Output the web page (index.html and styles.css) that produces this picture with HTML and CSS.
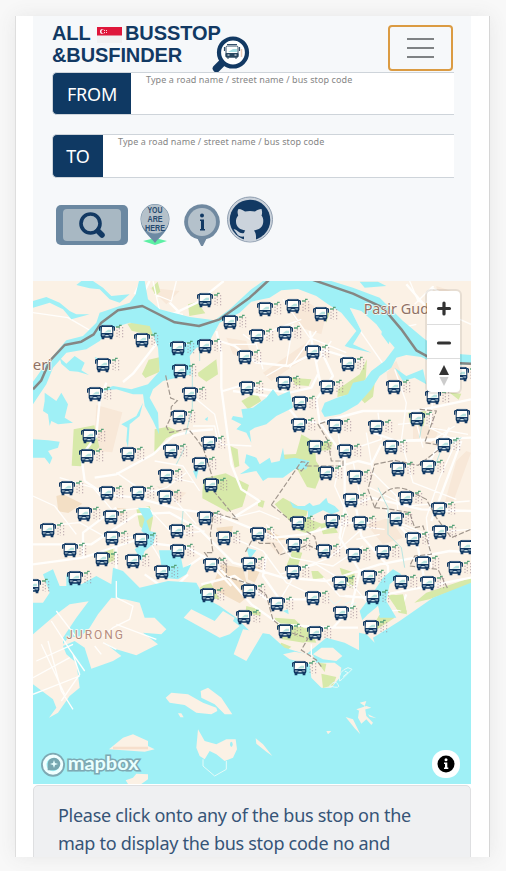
FILE: index.html
```html
<!DOCTYPE html>
<html lang="en">
<head>
<meta charset="utf-8">
<title>All Busstop &amp; Busfinder</title>
<link rel="stylesheet" href="styles.css">
</head>
<body>
<div class="page">
  <header class="panel">
    <div class="navbar">
      <div class="brand">
        <div class="brand-line"><span class="all">ALL</span>
          <svg class="flag" viewBox="0 0 25 16"><path fill="#f1f1f2" d="M0 0h25v16H0z"/><path fill="#df173b" d="M0 0h25v8.500H0z"/><circle cx="5.500" cy="4.500" r="2.500" fill="#fff"/><circle cx="6.600" cy="4.500" r="2.200" fill="#df173b"/><path d="M7 3.500h1m1 0h1M7 5.500h1m1 0h1" stroke="#ffd8dd"/></svg>
          <span class="busstop">BUSSTOP</span></div>
        <div class="brand-line second">&amp;BUSFINDER</div>
        <svg class="brand-glass" viewBox="0 0 38 36"><path d="M12 25 4.500 32.500" stroke="#123963" stroke-width="7.500" stroke-linecap="round"/><circle cx="21" cy="16.500" r="14" fill="#fff" stroke="#123963" stroke-width="4.200"/><rect x="14" y="10" width="12" height="11" rx="1.500" fill="#fff" stroke="#34506b"/><path d="M15 8.500h10M12.500 11v4m15-4v4" stroke="#34506b" stroke-width="1.200"/><path d="m16 16 5-3h4v3z" fill="#a8dfe3"/><path d="M14 17.500h12V21H14zM16 20v3m8-3v3" fill="#28465f" stroke="#28465f"/><path d="M15.500 19h2m5 0h2" stroke="#fff"/><path d="M29.500 13v8" stroke="#e8cbb8" stroke-width="1.500"/></svg>
      </div>
      <button class="toggler" aria-label="Menu"><i></i><i></i><i></i></button>
    </div>
    <div class="field"><span class="tag from">FROM</span><span class="input">Type a road name / street name / bus stop code</span></div>
    <div class="field second-field"><span class="tag to">TO</span><span class="input">Type a road name / street name / bus stop code</span></div>
    <div class="tools">
      <svg class="t-search" viewBox="0 0 72 40"><rect width="72" height="40" rx="5" fill="#6b88a1"/><rect x="7" y="4" width="58" height="32" rx="4" fill="#a8b8c3"/><circle cx="34.500" cy="18.500" r="9.500" fill="none" stroke="#123963" stroke-width="3.600"/><path d="m42 26 4 4" stroke="#123963" stroke-width="5.500" stroke-linecap="round"/></svg>
      <svg class="t-here" viewBox="0 0 30 42"><path d="m3 37 12-3 12 3-12 4z" fill="#5cf0a4"/><path d="M15 39C11 33 .5 27 .5 15a14.500 15 0 0 1 29 0C29.500 27 19 33 15 39z" fill="#6d8aa3"/><ellipse cx="15" cy="15" rx="14" ry="14.500" fill="#b5c1ca"/><g class="here-text"><text x="15" y="9.300" textLength="15" lengthAdjust="spacingAndGlyphs">YOU</text><text x="15" y="18.300" textLength="15" lengthAdjust="spacingAndGlyphs">ARE</text><text x="15" y="27.300" textLength="20" lengthAdjust="spacingAndGlyphs">HERE</text></g></svg>
      <svg class="t-info" viewBox="0 0 36 42"><path d="m18 41-3.500-7a16.500 16.500 0 1 1 7 0z" fill="#7089a0" stroke="#7089a0" stroke-width="2.500" stroke-linejoin="round"/><circle cx="18" cy="18" r="14" fill="#b4c1cb"/><circle cx="18" cy="11.500" r="2" fill="#123963"/><path d="M16 15.500h4V25h1v1.500h-5V25h1v-8h-1z" fill="#123963"/></svg>
      <svg class="t-git" viewBox="0 0 48 47"><defs><clipPath id="disc"><circle cx="24" cy="23.500" r="22"/></clipPath></defs><circle cx="24" cy="23.500" r="22.500" fill="#cbd3dc" stroke="#8e9daf"/><circle cx="24" cy="24" r="20.300" fill="#123963"/><path clip-path="url(#disc)" fill="#cbd3dc" d="M12.500 13c3 0 5 1.500 6.500 2.500q5-1.200 10 0c2-1.500 4-2.500 6.500-2.500q1.200 4 0 6.500c2 2.500 2 5 1.500 8-1 4-4 6-9 7 1.500 2 2 4 2 6v6H18v-6c-6 1-7-3-9-5.500q-2-1.500-1-1.800c4 .5 5 5 10 3.800.2-1 .5-1.800 1.200-2.500-5-1-8-3-9-7-.5-3-.2-5.500 2-8-1-3-.8-5 .3-6.500z"/></svg>
    </div>
  </header>
  <main class="map">
    <svg class="chart" viewBox="0 0 1314 1509">
      <defs>
        <symbol id="bus" viewBox="0 0 84 54" overflow="visible">
          <g class="shelter"><path d="M57 20v27M64 15v28M74 12v36" stroke="#9a8290" stroke-width="2" stroke-dasharray="4 5"/><path d="M54 12h12m-3-5h8" stroke="#58a27a" stroke-width="4"/></g>
          <rect x="8" y="6" width="38" height="38" rx="6" fill="#123963"/>
          <path d="M12 12h30l1 18H11z" fill="#fffdf9"/><path d="M14 7h26" stroke="#7690a8" stroke-width="2"/>
          <path d="m18 29 12-9h9v8z" fill="#b7e3df"/>
          <path d="M5 11v12M49 11v12M5 11h5m34 0h5" stroke="#123963" stroke-width="4" fill="none"/>
          <path d="M15 42v7m24-7v7" stroke="#123963" stroke-width="8"/>
          <path d="M12 36h8m14 0h8M22 38h10" stroke="#c9dce3" stroke-width="3.500"/>
        </symbol>
      </defs>
      <path fill="#fbf1e5" d="M0 0h1314v1509H0z"/>
      <g class="town"><path d="M70 645l20-5 58 28-42 28-30-5zM565 850l65 12 20 80-30 25-85-45zM550 740l50-5-10 50-30-5zM645 850l40 10-20 45-20-10zM250 680l30 3-15 22zM690 740l70 35-30 5z"/><path class="soft" d="M190 372l78 22-30 120-55-5zM690 275l130-90 35 25-75 45-65 45zM1060 265l30-25 25 60-50 15zM1270 540l30-30 14 5-60 165-20-10zM350 20l90 10-40 40zM580 170l60 10 20 60-60-20zM770 90l50-30 60 40-15 60-60-20zM1210 15l60 20-20 80-30-20zM370 615l90 20-30 30zM1000 730l70-20 40 60-60 20zM700 780l60 10-20 35zM1140 430l80 10-20 50-60-15z"/></g>
      <g class="park"><path d="M122 445l62-12 15 65-55 58-28-2zM283 128l35-6 55 20-12 22-65-15zM347 236l35-8-3 45-42 18-10-12zM495 275l55-40 5 45-35 22-24-17zM365 445l40-8 35 15-40 20-26 30-10 15zM465 70l27-8 25 35-48 8zM356 20l18-18 8 30-14 12zM508 632l5-40 65-15 70 35-20 65-45 15-75-40zM592 495l22 10 5 50-14 5zM625 360l45-25 15 25-40 25zM775 290l60 5-8 20-40-3zM870 90l20 5-10 30zM915 325l65-45 22-45-4 60-45 45-40 8zM975 345l50-38-5 40-25 20zM800 480l5-20 45 25 50-3-8 25-45 3 2 30 20 30-22 53-25-5-30-55-40-22-8-20 45-2zM725 670l25-20 45 25 30 10-5 20-50 15zM770 705l20-5 80 30-40 30-45-15zM770 870l-12-10 20-50 30 5-15 45zM310 685l40-10 10 35-10 55-30-30zM210 808l30-10 5 40-25 10zM725 1010l60 5 42 40-15 30-65-10zM780 1045l50-5 20 45-40-3zM1070 940l40 5 12 55-25-5zM1030 995l35-5 20 20-60 40zM1180 935l134-45v20l-125 45-45 10zM920 860l45 15-5 45-25-10zM640 975l45 12-3 18-45-10zM500 920l30-20 30 55-40-5zM745 1085l30 12-15 12-25-12zM855 1145l55 15-10 65-35-25zM1250 335l35 3-8 18z"/><path d="M1125 395l55-5-8 45-40-5zM860 730l35-10 20 35-45 5zM835 870l20 0 20 20-35 5zM675 655l20 5-5 20-15-5z"/></g>
      <g class="road thin"><path d="M0 645l65 30 65 85M20 735l120-10 90 50 110-10 55 90M80 590l100 30 60 70 105-10 75 80 95-10M250 575l65 45 95 20 80 90M365 540l85 15 50 75M485 350l60 50 20 90 90 5M610 775l80 35 70 95 85 40M700 730l75 100 125 25 90-60M1000 455l20 120 70 70 10 90 75 30M910 420l15 100-20 95 40 90-30 110M1200 350l-10 90 80 40-50 110-40 120 15 150M1085 265l35 100-15 115 35 125 130 50M740 880l110-30 115 70 65 75 90-10M870 890l50 55 90 5M745 950l50-85 95-35 90-80M585 190l80 0 60-45 80-30M630 160l40 30 20 75M750 55l80 115 110 45M780 130l-20 120-60 35M850 150l-80 110M895 180l-45 65M950 85l35 70 80 115M1130 0l25 60 159 70M1145 70l50-50 80 40M1060 150l90-20M360 0l20 90 70 10M430 0l-15 60-50-20M0 95l105 15 95 55M480 435l65 0 10 50M600 710l80-20 60 25M1060 710l110 45 144-10M1010 620l110 55 190-15"/><path d="M0 1110l100-75 55 145M55 1070l50 180 90 15M0 1210l135-50M90 1000l60 80 55-10M230 950l75 80 70 30M185 1150l60-45M175 1140l60 10M330 640l70-20 60-45M415 590l70 15M965 735l90 10M970 775l70-15M1035 395l10 80-60 20M1095 430l55-5 20 75M1115 480l80 0 70-45M1190 440l115 20M960 540l20 100-40 35"/></g>
      <g class="road"><path d="M0 850l150-20 150-50 165 20 80 45 110 125 85 60 145 10 90 0M0 790l175 0 135-90 100-5 90 50 100 100 150 45 130 10 160-50 210-40 174 10M150 830l0-75 100-75M155 600l-10-75 45-60 10-105 20-55M185 590l65-10 110-60 60-55 60-15 60-5M155 600l60 40 95 10 130 35 110 15 175 70 90-10 125-35 70 0M250 800v145M285 980l10-30M410 188h-40l-70 90-30 25M560 180l45 15 65 50 95 10 100-50 115 35M600 710l80-50-55-35-30-75-30-230 0-105-15-65M570 330l50-15 150 20 65-15 20-40M850 425l-55-10-55-65-140-20M860 425l-10-70 50-70-35-75M860 425l130-35h160l164-35M860 425l75 105 0 150-15 90 60 100-25 110-55 60M1045 490l-30 60-40-10-70 20M1020 455l70 25 224-10M935 680l80-30 150 35 149 5M1055 680l100 120 20 100M1060 940l254-50M1190 540l60-100M1285 480l-90 240M970 685l15 80 80 90 0 60-70 35-60-5M700 820l-10 65 50 70 90 0"/><path d="M460 860l50-35 85 90M505 910l100-25 110 80M335 880l50 35 50-5 30-30M1120 940l-20 50M830 150l35 170M1180 75l20-60M305 40l20-40M350 0l-18 35 20 45 55 25 85-40 80-65M410 65l30 30M1120 10l70 80-10 120"/></g>
      <g class="water">
        <path d="M0 302 30 260 60 225 100 178 150 165 190 125 200 95 240 82 290 65 308 40 318 0H335L345 55 380 85 470 108 545 118 590 85 655 25 690 0H895L960 20 1040 50 1110 120 1170 170 1230 215 1314 222V250L1220 255 1165 228 1120 222 1090 230 1075 260 1040 285 1015 325 975 370 940 390 920 400 875 408 865 390 875 365 912 350 945 340 960 305 995 298 1015 270 1055 240 1085 200 1060 170 1030 130 985 90 950 80 985 150 960 190 1015 215 950 200 935 195 970 150 925 95 885 70 850 45 795 24 745 28 710 50 655 62 620 95 560 125 535 170 530 190 490 200 470 225 475 280 430 290 390 300 360 325 350 350 375 395 378 460 360 420 335 375 330 340 300 340 250 325 200 330 240 315 295 325 345 310 380 270 375 200 350 135 290 125 240 140 200 180 160 205 100 215 60 260 40 310 0 370Z"/>
        <path d="M330 365 320 405 290 430 285 500 280 480 283 440 265 430 310 405Z"/>
        <path d="M80 230 100 248 125 225 155 245 145 268 168 282 135 272 110 270 85 248ZM35 335 70 360 85 335 105 370 95 410 120 425 75 430 55 420 50 435 45 400 30 390 35 360ZM0 475 45 478 80 482 75 500 60 505 45 510 58 530 50 550 35 530H0ZM185 228 215 238 195 247Z"/>
        <path d="M720 325 735 345 770 330 780 380 750 395 730 405 700 430 665 440 650 450 655 485 640 455 610 445 625 430 595 415 600 405 630 410 625 385 660 380 700 350Z"/>
        <path d="M640 520 670 530 680 550 710 530 715 545 740 540 750 500 755 535 785 530 830 540 820 565 785 565 750 590 705 590 690 600 670 570 620 580 650 560 635 545Z"/>
        <path d="M770 660 790 675 815 675 830 665 840 675 860 670 880 650 885 665 905 675 920 690 895 700 870 688 845 700 825 710 825 690 780 680Z"/>
        <path d="M315 680 350 682 360 705 340 720 350 750 370 755 360 790 335 810 325 840 305 805 340 780 345 765 325 750 335 715ZM378 808 440 808 450 860 475 850 460 880 435 895 390 890ZM640 800 670 808 650 835ZM480 570 498 560 490 595ZM515 415 525 407 523 420ZM750 990 765 985 767 1000Z"/>
        <path d="M180 0 210 20 235 45 290 40 260 65 230 55 200 25 170 22 130 12 145 0ZM0 60 40 48 80 65 110 90 130 100 170 100 115 115 90 85 50 65 0 80ZM1050 135 1075 165 1067 190 1045 160ZM995 20 1060 15 1035 2H980ZM1085 260 1120 285 1170 265 1180 310 1145 290 1110 300Z"/>
        <path d="M0 965 30 965 50 935 30 880 60 865 80 915 100 915 100 880 145 910 190 885 235 910 240 860 270 870 320 920 405 900 490 905 515 950 560 975 610 1010 650 1050 710 1060 755 1100 805 1115 820 1120 850 1095 880 1070 935 1085 978 1108V1055L1000 1060 1025 1085 1020 1070 1100 1020 1200 950 1314 905V1509H0Z"/>
        <path d="M1010 950 1050 890 1080 865 1105 880 1070 910 1060 960 1090 1010 1040 1010 1035 975 990 1025 980 990Z"/>
      </g>
      <g fill="#fbf1e5">
        <path d="M0 1060 70 1000 110 970 167 961 130 1010 90 1070 90 1090 105 1070 145 1065 170 1040 195 1000 235 950 275 955 320 965 335 1010 365 1010 400 1045 385 1060 330 1055 375 1090 310 1123 250 1105 215 1085 265 1125 240 1140 175 1163 155 1100 125 1080 90 1095 100 1120 130 1145 140 1220 110 1245 75 1295 48 1310 70 1280 60 1255 0 1210Z"/>
        <path d="M452 1010 475 985 545 1020 570 990 605 1010 600 1020 620 1035 590 1060 560 1070ZM630 1045 690 1055 640 1140 602 1120ZM750 1120 785 1112 840 1122 850 1145 905 1145 925 1160 920 1190 895 1220 865 1220 835 1190 830 1150 770 1135ZM840 1120 865 1100 900 1100 928 1125 910 1140 870 1135Z"/>
        <path d="M398 1250 415 1235 465 1240 510 1265 550 1280 553 1290 535 1300 490 1295 455 1272 410 1265ZM503 1230 525 1220 565 1250 598 1300 575 1300 545 1270 505 1250ZM228 1405 270 1370 300 1360 345 1380 345 1395 365 1405 335 1412ZM495 1345 515 1380 550 1390 580 1375 608 1375 612 1405 600 1430 575 1440 550 1420 530 1410 515 1435 500 1425 490 1400ZM278 1498 300 1490 310 1478 345 1480 345 1495 325 1509H285ZM668 1372 690 1390 718 1425 700 1412 670 1388ZM938 1308 960 1315 982 1360 965 1342ZM978 1290 995 1275 1000 1305 1020 1325 1015 1332 1000 1315 985 1328 975 1310ZM435 1297h10l7 12h-10zM980 1265l20-5-5 15zM880 1350l15 0-10 10zM1005 1300l25 12-20-5zM970 1285l30-10 15 5-35 10z"/>
        <path d="M1035 975 1040 1000 1020 1035 980 1040 985 1020 1005 1000Z"/>
      </g>
      <path class="park" d="M855 1145l25 3-5 25zM865 1178l45 10-10 25-30 8zM1065 945l45-5 12 55-30-10z"/>
      <g class="road thin"><path d="M0 1190l110-60M55 1020l55 85 45 65M45 1080l40 150 35 55M25 1090l70 150M0 1240l140-55M70 990l65 85M10 1140l110-50M120 1120l20 60-55 80M250 900v50l50 25-10 40-50 25-30 25M250 1030l120 45M185 1095l20 25M210 1085l40 20M410 188h60M835 1090v40"/></g>
      <path d="M240 1401h105" stroke="#f6dfcc" stroke-width="8"/><ellipse cx="595" cy="1390" rx="4" ry="8" fill="#9ff0f6"/>
      <g fill="none" stroke="#e5fbf8" stroke-width="3"><path d="M510 1435l0 20 35 30 35-20 0-25M920 1200q-5-30 25-40l12 5-30 30zM935 1170l10 5-15 12M890 1215q15-20 25-5t-25 5M885 950l20 20 20-15M935 970l20-10M950 975l20-10"/></g>
      <g fill="none" stroke="#b9e6e2" stroke-width="3"><path d="M478 260v120l-20 80M455 500l-25 50M1035 620l30 60 0 80 40 40 10 60M1200 570l25-65 60-35M445 750l5-60M1160 470l10-60M770 300l-15 30M500 180v60"/></g>
      <g class="dash"><path d="M398 283l15 68 20 8-18 18-3 35-12 25 10 18 55-12 25 30 22 32 25 80 5 45 70 85-70-20-10 65 8 55-25 0 25 35 20-20 20 22 0 35 80 25 40 30 20 75 45 35 60 20-20 35 45 30 15 20M715 672l90-130 20 3-20 25-15-8M820 555h110v-15h-35l-10-60-30-50 45-15M715 672l75 60 55 35 10 40-30-15-85 30-20-35-40 0-20-15-25 45M1025 680l-20-55 20-75 60-12 70 15 60-45M1025 680q30-75 95-55l60 30 30 55 45 60 59-25M1025 680l50 5 55 10 15 45 25-5 25 85-50 5-15 30 85 10 30 60M1160 385l50 5-35 95 60 10"/></g>
      <path class="border" d="M0 325 25 298 50 240 95 192 145 182 182 160 205 125 255 88 328 75 425 124 498 135 560 115 650 50 710-5M835-5 960 38 1050 80 1105 145 1150 208 1190 230 1250 245 1314 248"/>
      <g class="place"><text x="-1" y="266" textLength="57" font-size="45">eri</text><text x="992" y="99" textLength="196" lengthAdjust="spacingAndGlyphs" font-size="44">Pasir Gud</text><text class="jurong" x="100" y="1074" textLength="170" font-size="36">JURONG</text></g>
      <g id="stops"></g>
      <g class="mark"><circle cx="60" cy="1451" r="31" fill="none" stroke="#7ea9b3" stroke-width="10"/><circle cx="60" cy="1451" r="25" fill="#9ff0f6" stroke="#f0ffff" stroke-width="11"/><path d="M44 1468v-20a19 19 0 1 1 19 20z" fill="#77a7b0"/><path d="m63 1437 3 9 9 3-9 3-3 9-3-9-9-3 9-3z" fill="#e8ffff"/><text x="104" y="1466" textLength="213" lengthAdjust="spacingAndGlyphs">mapbox</text></g>
    </svg>
    <div class="controls"><button aria-label="Zoom in"><svg viewBox="0 0 34 34"><path d="M17 12v11m-5.500-5.500h11" stroke="#333" stroke-width="3.200" stroke-linecap="round"/></svg></button><button aria-label="Zoom out"><svg viewBox="0 0 34 34"><path d="M11.500 18h11" stroke="#333" stroke-width="3.200" stroke-linecap="round"/></svg></button><button aria-label="North"><svg viewBox="0 0 34 34"><path d="m12 16 5-10 5 10z" fill="#333"/><path d="m12.500 18 4.500 9 4.500-9z" fill="#ccc"/></svg></button></div>
    <svg class="attrib" viewBox="0 0 28 28"><rect width="28" height="28" rx="13" fill="#fff"/><circle cx="14" cy="14" r="8.500"/><circle cx="14" cy="9.800" r="1.500" fill="#fff"/><path d="M12 12.500h3.300v5h1V19H12v-1.500h1V14h-1z" fill="#fff"/></svg>
  </main>
  <section class="note"><p>Please click onto any of the bus stop on the</p><p class="line-two">map to display the bus stop code no and</p></section>
</div>
<script src="stops.js"></script>
</body>
</html>
```
FILE: styles.css
```css
* { box-sizing: border-box; }
body { margin: 0; height: 871px; overflow: hidden; background: #f8f8f8; font-family: "Noto Sans", sans-serif; padding: 16px 16px 0 15px; }
.page { width: 475px; height: 841px; padding: 0 18px 0 17px; overflow: hidden; background: #fff; border-left: 1px solid #dedede; border-right: 1px solid #d6d6d6; box-shadow: 0 0 18px #e7e7e7; }
.panel { height: 265px; padding: 0 17px 0 19px; background: #f6f8fa; }
.navbar { height: 56px; display: flex; justify-content: space-between; }
.brand { position: relative; width: 198px; color: #123963; font: bold 20px/26px "Liberation Sans", sans-serif; padding-top: 6px; }
.brand-line { display: flex; height: 22px; white-space: nowrap; align-items: center; }
.all { width: 45px; letter-spacing: -.1px; }
.flag { width: 25px; height: 16px; margin-top: 4px; }
.busstop { margin-left: 3px; letter-spacing: -.1px; }
.second { letter-spacing: -.1px; }
.brand-glass { position: absolute; left: 160px; top: 20px; width: 38px; height: 36px; }
.toggler { width: 65px; height: 46px; margin: 9px 1px 0 0; padding: 0; background: #f6f8fa; border: 2px solid #db9b42; border-radius: 4px; display: flex; flex-direction: column; align-items: center; justify-content: center; gap: 7px; }
.toggler i { width: 27px; height: 2px; background: #7f8284; }
.field { height: 43px; display: flex; }
.second-field { margin-top: 19px; height: 44px; }
.tag { display: flex; align-items: center; justify-content: center; background: #0f3963; color: #fff; font-size: 18px; border: 1px solid #ced4da; border-right: 0; border-radius: 5px 0 0 5px; letter-spacing: -.2px; }
.from { width: 79px; }
.to { width: 51px; }
.input { flex: 1; background: #fff; border: solid #ced4da; border-width: 1px 0; color: #858585; font-size: 9px; line-height: 12px; padding: 1px 0 0 15px; letter-spacing: .1px; white-space: nowrap; }
.tools { display: flex; align-items: flex-start; padding: 18px 0 0 4px; }
.t-search { width: 72px; height: 40px; margin-top: 9px; }
.t-here { width: 30px; height: 42px; margin: 8px 0 0 12px; }
.t-info { width: 36px; height: 42px; margin: 8px 0 0 14px; }
.t-git { width: 48px; height: 47px; margin-left: 6px; }
.here-text { font: bold 9px "Liberation Sans", sans-serif; fill: #274b70; text-anchor: middle; }
.map { position: relative; height: 503px; width: 438px; }
.chart { display: block; width: 438px; height: 503px; }
.water { fill: #9ff0f6; }
.town { fill: #f3dfc5; }
.soft { fill: #f8e8d8; }
.park { fill: #d7e9a9; }
.road { fill: none; stroke: #fffefc; stroke-width: 7; stroke-linejoin: round; }
.thin { stroke-width: 4; }
.dash { fill: none; stroke: #a0968d; stroke-width: 3.5; stroke-dasharray: 16 6; }
.border { fill: none; stroke: #858784; stroke-width: 7.5; stroke-linejoin: round; }
.place { fill: #8f7165; stroke: #fff8ef; stroke-width: 4px; paint-order: stroke; font-family: "Noto Sans", sans-serif; }
.jurong { fill: #b58b7d; font-family: Roboto, sans-serif; }
.mark text { font: bold 54px Lato, sans-serif; fill: #e8ffff; stroke: #7ea9b3; stroke-width: 9px; paint-order: stroke; }
.controls { position: absolute; left: 394px; top: 10px; width: 33px; height: 101px; background: #fff; border-radius: 4px; box-shadow: 0 0 0 2px rgba(0,0,0,.08); }
.controls button { display: block; width: 33px; height: 34px; padding: 0; border: 0; border-bottom: 1px solid #ddd; background: transparent; }
.controls button:last-child { border: 0; }
.controls svg { display: block; width: 34px; height: 34px; }
.attrib { position: absolute; left: 399px; top: 469px; width: 28px; height: 28px; }
.note { width: 438px; height: 90px; margin-top: 1px; padding: 15px 24px; background: #eff0f2; border: 1px solid #dedfe1; border-radius: 5px 5px 0 0; color: #365477; font-size: 18px; line-height: 28px; }
.note p { margin: 0; white-space: nowrap; letter-spacing: -.28px; }
```
FILE: stops.js
```js
// Centre of each bus stop marker in page coordinates; the chart origin is 33,281.
const stops = "205,300 230,322 107,332 142,340 178,348 205,346 103,365 180,371 95,394 190,394 179,417 89,436 209,443 245,357 247,388 265,309 293,306 321,314 257,336 285,333 313,352 348,364 284,383 327,387 300,403 299,425 335,426 376,427 417,419 394,387 433,397 462,416 461,374 315,447 345,451 391,447 444,445 326,473 355,477 398,469 428,467 351,500 406,498 439,509 298,523 332,521 360,523 396,519 440,532 413,539 258,534 294,545 324,551 354,555 383,552 423,563 455,568 466,547 293,572 340,583 369,577 401,582 428,583 313,598 373,597 277,604 341,613 371,627 285,631 315,633 300,668 479,456 87,456 128,454 171,451 200,464 166,476 211,485 67,488 107,493 138,493 165,497 84,514 111,517 205,518 48,530 177,531 224,538 112,538 141,540 70,550 178,551 102,559 133,561 162,572 211,565 249,564 75,578 33,586 208,595 249,591 244,617";
const layer = document.getElementById("stops");
for (const stop of stops.split(" ")) {
  const [x, y] = stop.split(",").map(Number);
  const bus = document.createElementNS("http://www.w3.org/2000/svg", "use");
  bus.setAttribute("href", "#bus");
  bus.setAttribute("x", (x - 33) * 3 - 27);
  bus.setAttribute("y", (y - 281) * 3 - 27);
  bus.setAttribute("width", 84);
  bus.setAttribute("height", 54);
  layer.append(bus);
}
```
